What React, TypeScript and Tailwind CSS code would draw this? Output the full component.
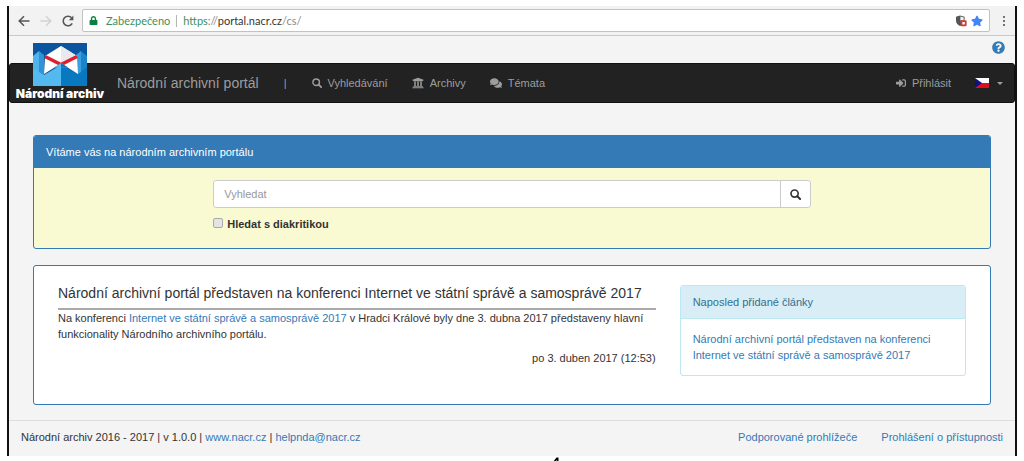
import React, { useState } from "react";
import { FaComments, FaLock, FaQuestionCircle, FaSignInAlt, FaStar, FaUniversity } from "react-icons/fa";

function SearchIcon({ className }: { className?: string }) {
  return (
    <svg viewBox="0 0 12 12" className={className} fill="none" stroke="currentColor" aria-hidden="true">
      <circle cx="5" cy="5" r="3.9" strokeWidth="1.8" />
      <path d="M8 8l3 3" strokeWidth="2.2" strokeLinecap="round" />
    </svg>
  );
}

function BrowserBar() {
  return (
    <div className="flex h-[30px] items-center border-b border-[#c9c9c9] bg-[#f2f2f2] px-[9px] text-[#555]">
      <button aria-label="Zpět" className="mr-2.5">
        <svg viewBox="0 0 12 12" className="size-3" fill="none" stroke="currentColor" strokeWidth="1.5">
          <path d="M11.5 6H1.5M6 1.2L1.2 6 6 10.8" />
        </svg>
      </button>
      <button aria-label="Vpřed" className="mr-2.5 text-[#d2d2d2]">
        <svg viewBox="0 0 12 12" className="size-3" fill="none" stroke="currentColor" strokeWidth="1.5">
          <path d="M0.5 6h10M6 1.2L10.8 6 6 10.8" />
        </svg>
      </button>
      <button aria-label="Obnovit" className="mr-2">
        <svg viewBox="0 0 12 12" className="size-3" fill="none" stroke="currentColor" strokeWidth="1.6">
          <path d="M10.2 8.3A4.8 4.8 0 1 1 9.6 2.8" />
          <path d="M11.4 0.6v4.6H6.8z" fill="currentColor" stroke="none" />
        </svg>
      </button>
      <div className="flex h-[23px] flex-1 items-center rounded-xs border border-[#c2c2c2] bg-white px-1.5 font-['Lato','Noto_Sans',sans-serif] text-[11px]">
        <FaLock className="size-[9px] text-[#0b8043]" />
        <span className="ml-2 text-[#3f8f5c]">Zabezpečeno</span>
        <span className="mx-1.5 h-3 w-px bg-[#b5b5b5]" />
        <span className="text-[#888]">
          <span className="text-[#3f8f5c]">https</span>://<span className="text-[#333]">portal.nacr.cz</span>/cs/
        </span>
        <svg viewBox="0 0 12 12" className="ml-auto size-3" aria-hidden="true">
          <path d="M5 .6L9.6 1.8V5.5C9.6 8.2 7.6 10.2 5.4 11 2.8 10.2 1 8.2 1 5.5V1.8z" fill="#555" />
          <path d="M5.4 1.6L8.7 2.5V5.5H5.4z" fill="#f4f4f4" />
          <rect x="5.6" y="5.2" width="6" height="6" rx="1" fill="#d63c30" />
          <rect x="7.4" y="7" width="2.4" height="2.4" fill="#fff" />
        </svg>
        <FaStar className="ml-1 size-3 text-[#4285f4]" />
      </div>
      <button aria-label="Nabídka" className="ml-3">
        <svg viewBox="0 0 4 12" className="h-3 w-1" fill="currentColor">
          <circle cx="2" cy="2" r="1.1" />
          <circle cx="2" cy="6" r="1.1" />
          <circle cx="2" cy="10" r="1.1" />
        </svg>
      </button>
    </div>
  );
}

function Logo() {
  return (
    <a href="#" className="absolute -top-[21px] left-1 flex w-[92px] flex-col items-center text-white">
      <svg viewBox="0 0 54 43" className="h-[43px] w-[54px]" aria-hidden="true">
        <rect width="54" height="43" fill="#0b54a0" />
        <path d="M0 13L6 8V43H0z" fill="#4fb4ec" />
        <path d="M6 8l5 4v21l-5-2z" fill="#2f93d6" />
        <path d="M54 13L48 8V43h6z" fill="#1a84cc" />
        <path d="M48 8l-5 4v21l5-2z" fill="#3aa0e0" />
        <path d="M0 24l6 5 5 3 17-10v21H0z" fill="#53b9ee" />
        <path d="M54 24l-6 5-3 2-17-9v21h26z" fill="#0878c0" />
        <path d="M12 13L28 3l16 10-16 9z" fill="#fff" />
        <path d="M28 3l16 10-16 9z" fill="#e9e9ee" />
        <path d="M12 15l15 6-16 10zM44 15l-15 6 16 10z" fill="#fff" />
        <path d="M12 13.500l16 8 16-8" fill="none" stroke="#df1f2d" strokeWidth="3.4" />
        <path d="M28 20l7 4.500H21z" fill="#53b9ee" />
        <path d="M28 20l7 4.500h-7z" fill="#0878c0" />
      </svg>
      <span className="whitespace-nowrap font-['Inter','Liberation_Sans',sans-serif] text-[12px]/4 font-black">Národní archiv</span>
    </a>
  );
}

function Flag() {
  return (
    <svg viewBox="0 0 14 10" className="h-2.5 w-3.5" aria-hidden="true">
      <rect width="14" height="5" fill="#fff" />
      <rect y="5" width="14" height="5" fill="#e0101a" />
      <path d="M0 0l7 5-7 5z" fill="#10107e" />
    </svg>
  );
}

function NavBar() {
  return (
    <nav className="relative flex h-10 items-center rounded-[3px] border border-[#111] bg-[#222] pl-[107px] pr-[11px] text-[#9d9d9d]">
      <Logo />
      <a href="#" className="text-[14px]">Národní archivní portál</a>
      <span className="mx-[25px]">|</span>
      <div className="flex items-center gap-6">
        <a href="#" className="flex items-center gap-1.5"><SearchIcon className="size-2.5" />Vyhledávání</a>
        <a href="#" className="flex items-center gap-1.5"><FaUniversity className="size-3" />Archivy</a>
        <a href="#" className="flex items-center gap-1.5"><FaComments className="size-3" />Témata</a>
      </div>
      <div className="ml-auto flex items-center gap-6">
        <a href="#" className="flex items-center gap-1.5"><FaSignInAlt className="size-2.5" />Přihlásit</a>
        <button aria-label="Jazyk" className="flex items-center gap-2">
          <Flag />
          <span className="border-x-[3px] border-t-[3px] border-x-transparent border-t-[#9d9d9d]" />
        </button>
      </div>
    </nav>
  );
}

function SearchPanel() {
  const [query, setQuery] = useState("");
  const [accents, setAccents] = useState(false);
  return (
    <section className="overflow-hidden rounded-[3px] border border-[#337ab7] bg-[#fafad2]">
      <h2 className="bg-[#337ab7] px-3 py-2 text-white">Vítáme vás na národním archivním portálu</h2>
      <form className="mx-auto w-5/8 pb-4 pt-3" onSubmit={(e) => e.preventDefault()}>
        <div className="flex h-7 rounded-[3px] border border-[#ccc] bg-white">
          <input
            type="text"
            aria-label="Vyhledat"
            placeholder="Vyhledat"
            value={query}
            onChange={(e) => setQuery(e.target.value)}
            className="min-w-0 flex-1 px-2.5 outline-none placeholder:text-[#999]"
          />
          <button type="submit" aria-label="Hledat" className="flex w-[30px] items-center justify-center border-l border-[#ccc] text-[#333]">
            <SearchIcon className="size-[11px]" />
          </button>
        </div>
        <label className="mt-2 flex items-center gap-1 font-bold">
          <input
            type="checkbox"
            checked={accents}
            onChange={(e) => setAccents(e.target.checked)}
            className="mb-0.5 size-2.5 appearance-none rounded-xs border border-[#aaa] bg-[#e4e4e4] checked:bg-[#337ab7]"
          />
          Hledat s diakritikou
        </label>
      </form>
    </section>
  );
}

function NewsPanel() {
  return (
    <section className="grid grid-cols-[599fr_287fr] items-start gap-6 rounded-[3px] border border-[#337ab7] bg-white px-6 pb-7 pt-[19px]">
      <article>
        <h1 className="whitespace-nowrap border-b-2 border-[#aaa] pb-[7px] text-[14px]/4">
          Národní archivní portál představen na konferenci Internet ve státní správě a samosprávě 2017
        </h1>
        <p>
          Na konferenci <a href="#" className="text-[#337ab7]">Internet ve státní správě a samosprávě 2017</a> v Hradci Králové byly dne 3. dubna 2017 představeny hlavní funkcionality Národního archivního portálu.
        </p>
        <p className="mt-2 text-right">po 3. duben 2017 (12:53)</p>
      </article>
      <aside className="overflow-hidden rounded-[3px] border border-[#bce8f1]">
        <h2 className="border-b border-[#bce8f1] bg-[#d9edf7] px-3 py-2 text-[#31708f]">Naposled přidané články</h2>
        <p className="p-3">
          <a href="#" className="text-[#337ab7]">Národní archivní portál představen na konferenci Internet ve státní správě a samosprávě 2017</a>
        </p>
      </aside>
    </section>
  );
}

export default function App() {
  return (
    <div className="bg-white px-[7px] pt-1.5 font-['Liberation_Sans',Arial,sans-serif] text-[11px]/4 text-[#333]">
      <div className="border-x-2 border-[#111] bg-[#f4f4f4]">
        <BrowserBar />
        <div className="flex h-[27px] items-start justify-end pr-2.5 pt-[5px] text-[#337ab7]">
          <a href="#" aria-label="Nápověda"><FaQuestionCircle className="size-[13px]" /></a>
        </div>
        <NavBar />
        <main className="flex flex-col gap-4 px-6 pb-[15px] pt-8">
          <SearchPanel />
          <NewsPanel />
        </main>
        <footer className="flex justify-between border-t border-[#ddd] px-3 pb-[11px] pt-2">
          <div>
            Národní archiv 2016 - 2017 | v 1.0.0 | <a href="#" className="text-[#337ab7]">www.nacr.cz</a> | <a href="#" className="text-[#337ab7]">helpnda@nacr.cz</a>
          </div>
          <div className="flex gap-6 text-[#337ab7]">
            <a href="#">Podporované prohlížeče</a>
            <a href="#">Prohlášení o přístupnosti</a>
          </div>
        </footer>
      </div>
      <svg viewBox="0 0 10 6" className="ml-[54%] h-1.5 w-2.5" aria-hidden="true">
        <path d="M1 6L4.500 1.500H6.500V6H5V4L3 6z" fill="#000" />
      </svg>
    </div>
  );
}
